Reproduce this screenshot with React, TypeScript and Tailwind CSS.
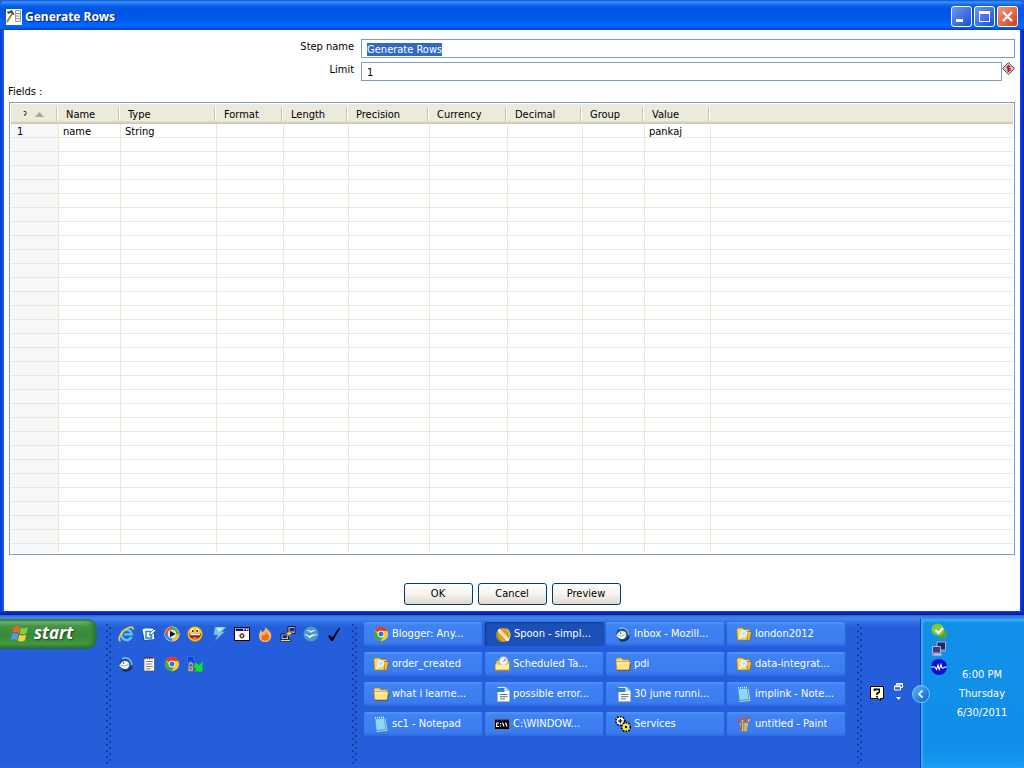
import { ReactNode, useEffect, useRef } from "react";

const columns = [
  { label: "Name", width: "w-[62px]" },
  { label: "Type", width: "w-[96px]" },
  { label: "Format", width: "w-[67px]" },
  { label: "Length", width: "w-[65px]" },
  { label: "Precision", width: "w-[81px]" },
  { label: "Currency", width: "w-[78px]" },
  { label: "Decimal", width: "w-[75px]" },
  { label: "Group", width: "w-[62px]" },
  { label: "Value", width: "w-[66px]" },
];

const firstRow = ["name", "String", "", "", "", "", "", "", "pankaj"];

const ROW_COUNT = 30;

function Icon({ children }: { children: ReactNode }) {
  return (
    <svg viewBox="0 0 16 16" className="h-4 w-4 shrink-0" aria-hidden="true">
      {children}
    </svg>
  );
}

function ChromeIcon() {
  return (
    <Icon>
      <circle cx="8" cy="8" r="7.2" fill="#f4c92c" />
      <path d="M8 8 1.8 4.2A7.2 7.2 0 0 1 14.6 5H8Z" fill="#dd3b2c" />
      <path d="M1.8 4.300A7.200 7.200 0 0 0 7.600 15.200L10.600 9.500 8 8 5.400 9.500Z" fill="#3fa648" />
      <circle cx="8" cy="8" r="3.400" fill="#fff" />
      <circle cx="8" cy="8" r="2.500" fill="#3a76c4" />
    </Icon>
  );
}

function ExplorerIcon() {
  return (
    <Icon>
      <path
        d="M13.400 11A5.200 5.200 0 1 1 13.800 8.400H6"
        fill="none"
        stroke="#1c6cc8"
        strokeWidth="3.600"
      />
      <path
        d="M13.400 11A5.200 5.200 0 1 1 13.800 8.400H6"
        fill="none"
        stroke="#62c3f8"
        strokeWidth="2.400"
      />
      <path
        d="M2.500 15C-1 14 3 6 8 3S15.600.6 15 3.600"
        fill="none"
        stroke="#f2c14a"
        strokeWidth="1.800"
      />
    </Icon>
  );
}

function DesktopIcon() {
  return (
    <Icon>
      <path d="M1 2.500 12.500 1l3 11.500L5 15.500l-4-3Z" fill="#1257a8" />
      <path d="M1.500 3.500 3 2.500h9l1.500 10.500-10 1Z" fill="#f5fbff" />
      <path d="M10 5.500H5v6.500h5.500V9H8" fill="none" stroke="#2b84cf" strokeWidth="1.500" />
      <path d="m8.500 7.500 4.500-4.500 2 1.500-4.500 4Z" fill="#fff" stroke="#1a4e92" strokeWidth=".7" />
    </Icon>
  );
}

function MediaIcon() {
  return (
    <Icon>
      <circle cx="8" cy="8" r="7.600" fill="#e8f1f8" />
      <path d="M8 .8A7.200 7.200 0 0 0 .8 8H4a4 4 0 0 1 4-4Z" fill="#e4572b" />
      <path d="M8 .8A7.200 7.200 0 0 1 15.200 8H12a4 4 0 0 0-4-4Z" fill="#57ad3a" />
      <path d="M.8 8A7.200 7.200 0 0 0 8 15.200V12a4 4 0 0 1-4-4Z" fill="#3b86dc" />
      <path d="M15.200 8A7.200 7.200 0 0 1 8 15.200V12a4 4 0 0 0 4-4Z" fill="#f3b72c" />
      <circle cx="8" cy="8" r="4.200" fill="#dfe8ee" />
      <path d="M6 4.800 11.500 8 6 11.200Z" fill="#111" />
    </Icon>
  );
}

function SmileIcon() {
  return (
    <Icon>
      <circle cx="8" cy="8" r="7.500" fill="#fbc72e" stroke="#b8741a" strokeWidth=".6" />
      <ellipse cx="5.500" cy="4.500" rx="1.500" ry="1.900" fill="#fff" />
      <ellipse cx="10.500" cy="4.500" rx="1.500" ry="1.900" fill="#fff" />
      <circle cx="5.800" cy="4.900" r="1" fill="#222" />
      <circle cx="10.200" cy="4.900" r="1" fill="#222" />
      <path d="M2 7.500h12A6 6 0 0 1 2 7.500Z" fill="#9c1c0e" />
      <path d="M3 7.500h10v1.800H3.500Z" fill="#fff" />
      <ellipse cx="8" cy="12" rx="2.600" ry="1" fill="#f2705a" />
    </Icon>
  );
}

function BoltIcon() {
  return (
    <Icon>
      <path d="M4 1h11.500L11 5.500h3L4 15l2.600-6H2.500Z" fill="#7cc4ea" stroke="#347fb8" strokeWidth=".6" />
      <path d="M4.800 1.600H13.500L8 6Z" fill="#c5e8f8" />
    </Icon>
  );
}

function WindowGearIcon() {
  return (
    <Icon>
      <path d="M.5 1.500h15v13H.5Z" fill="#fff" stroke="#000" />
      <path d="M1.500 2.500h13v2.500h-13Z" fill="#10107a" />
      <path d="M9 3h1.500v1.200H9ZM12 3h1.500v1.200H12Z" fill="#fff" />
      <path d="M8 7v5.600M5.200 9.800h5.600M6.200 8l3.600 3.600M9.800 8l-3.600 3.600" stroke="#000" />
      <circle cx="8" cy="9.800" r="1.700" fill="#f6e23a" stroke="#000" strokeWidth=".6" />
    </Icon>
  );
}

function FlameIcon() {
  return (
    <Icon>
      <path d="M8.500.5c.4 3 5.800 4 5.800 9.300a5.800 5.800 0 0 1-12.300.6C1.700 7.300 3.300 6.700 3.500 4c1.200.7 1.700 1.700 1.800 2.600C7.300 5 8.600 3 8.500.5Z" fill="#fbb564" />
      <path d="M8.800 6c2.400 2.400 3.600 4 3.100 6.300-.6 2.600-5.800 3.600-7.200.5-.9-2.200 1-3.300 2-4 .8 0 .9.6 1.300.9.8-1 1-2.200.8-3.700Z" fill="#ef6b1c" />
    </Icon>
  );
}

function PuttyIcon() {
  return (
    <Icon>
      <path d="M8 .5h7v7H8Z" fill="#d8d4c8" stroke="#111" />
      <path d="M9.500 1.800h4.500v3.700H9.500Z" fill="#1818b8" />
      <path d="M1 8h7.500v5.500H1Z" fill="#d8d4c8" stroke="#111" />
      <path d="M2.500 9.200h4.500v3H2.500Z" fill="#1818b8" />
      <path d="M.5 13.500h10v2H.5Z" fill="#d8d4c8" stroke="#111" strokeWidth=".7" />
      <path d="m11 4-6 4.500h3.500L6 12l7-5.500H9.500Z" fill="#fbea2c" stroke="#544c00" strokeWidth=".5" />
    </Icon>
  );
}

function OfficeIcon() {
  return (
    <Icon>
      <circle cx="8" cy="8" r="7.500" fill="#4a98cc" />
      <path d="M3 4.500c2-1 3.500-.6 4.700.8C9 4 11 3.800 13.500 5c-2.400-.2-4.400.3-5.500 2C6.700 5.500 5.400 4.600 3 4.500Z" fill="#fff" />
      <path d="M1 9c1.800-.8 3.900-.4 5.200 1.200C8 8.700 11 8 15 9c-3.500.3-6.700 1.200-8.300 3.200C5.400 10.200 3.700 9.200 1 9Z" fill="#fff" />
    </Icon>
  );
}

function CheckIcon() {
  return (
    <Icon>
      <path d="m2 10 1.800-1L6 11.800 12.500 2.500 14.500 1.500 6.800 15H5.200Z" fill="#000" />
    </Icon>
  );
}

function ThunderbirdIcon() {
  return (
    <Icon>
      <circle cx="8.200" cy="8" r="7" fill="#1f4f90" />
      <path d="M4 2.800c4.500-2.500 9.800.2 9.800 6.200" fill="none" stroke="#6ab6ea" strokeWidth="1.800" />
      <path d="M1.200 9.500 4 6c2-1.600 5.600-1.200 6.800 1 1.300 2.600-.4 5.500-3 5.900C5 13.200 3 12 1.200 9.500Z" fill="#f4f4f0" />
      <path d="m2.500 9.200 3.500.8 4.500-1.500" fill="none" stroke="#9da2a8" strokeWidth=".8" />
      <circle cx="5.600" cy="7" r=".7" fill="#333" />
      <path d="M5 14c3 1.800 7 .6 9-3.200" fill="none" stroke="#12294e" strokeWidth="1.500" />
    </Icon>
  );
}

function NotesIcon() {
  return (
    <Icon>
      <path d="M3 2h10.500v13H3Z" fill="#fffef4" stroke="#555" strokeWidth=".7" />
      <path d="M4 .8v2.400M6.300.8v2.400M8.600.8v2.400M11 .8v2.400" stroke="#44351f" strokeWidth="1.100" />
      <path d="M4.800 5.500h7M4.800 8h6M4.800 10.500h7M4.800 12.800h5" stroke="#707070" strokeWidth=".9" />
    </Icon>
  );
}

function SyncIcon() {
  return (
    <Icon>
      <path d="M.5.5h7L6 3l2.500 2.500-2 2-3-2.500L.5 7Z" fill="#0b45d8" stroke="#4f8fe0" strokeWidth=".5" />
      <path d="M15.500 5.500V15.500H7l2.500-2-3-3L8.500 6.500l3.500 2.500Z" fill="#12e022" />
      <path d="M2.200 10V8.500a1.600 1.600 0 0 1 3.200 0V10" fill="none" stroke="#bbb" strokeWidth="1.100" />
      <path d="M1 10h5.600v5.500H1Z" fill="#aaa" stroke="#555" strokeWidth=".6" />
      <path d="M3.300 11.500h1v2h-1Z" fill="#333" />
    </Icon>
  );
}

function FolderIcon() {
  return (
    <Icon>
      <path d="M.8 3.500 2 2h4.500L8 3.800h6.200v10H1.500Z" fill="#f6d468" stroke="#a8781c" strokeWidth=".6" />
      <path d="M1 6h12.500l2-.3-1.200 8.300H1.800Z" fill="#fbe48c" stroke="#a8781c" strokeWidth=".6" />
      <path d="M2 6.900h11.500" stroke="#fffbd8" />
      <path d="M2 14.400h12.500l1-7" fill="none" stroke="#5c4718" strokeWidth=".7" />
    </Icon>
  );
}

function SearchFolderIcon() {
  return (
    <Icon>
      <path d="M.8 3.500 2 2h4.500L8 3.500h5.500V14h-12Z" fill="#fbd766" stroke="#a8781c" strokeWidth=".7" />
      <path d="M10.500 5.500h5.200l-2 9h-2.200Z" fill="#f5bc3c" stroke="#7d5512" strokeWidth=".6" />
      <circle cx="7.800" cy="7.500" r="3" fill="#c3e6fa" stroke="#fff" />
      <path d="m5.500 9.900-2.200 2.800" stroke="#fff" strokeWidth="1.500" />
    </Icon>
  );
}

function SpoonIcon() {
  return (
    <Icon>
      <circle cx="8" cy="8" r="7" fill="#e89a1c" />
      <path d="M3.500 2.800A7 7 0 0 0 7.500 15C3 13 .5 8 3.500 2.800Z" fill="#5d8d34" />
      <path d="M11 1.800A7 7 0 0 1 13 13" fill="none" stroke="#c9d4a2" strokeWidth="1.200" />
      <path d="m4.500 3.500 8 9" stroke="#fff8df" strokeWidth="3.200" strokeLinecap="round" />
      <path d="m5 3.800 7.500 8.500" stroke="#e8b85a" strokeWidth=".7" />
    </Icon>
  );
}

function ScheduleIcon() {
  return (
    <Icon>
      <path d="M2 5.500 4 4h9l2.500 2V14.500H1Z" fill="#f6cb58" stroke="#a67820" strokeWidth=".7" />
      <circle cx="9.500" cy="5" r="4.500" fill="#eef4f8" stroke="#8b98a5" strokeWidth=".8" />
      <path d="M9.500 5.500 12 2.800" stroke="#333" strokeWidth=".8" />
      <path d="M1.500 8 5 9h7l3-1.500V13H1.500Z" fill="#fbe9a4" />
    </Icon>
  );
}

function WriterIcon() {
  return (
    <Icon>
      <path d="M3.500 1h8l4 4v10.500h-12Z" fill="#fff" stroke="#9db2c8" strokeWidth=".5" />
      <path d="M11.500 1v4h4Z" fill="#b8cbdc" />
      <path d="M0 2h10.500v4H2Z" fill="#2c88c4" />
      <path d="M6 8.500h7.500M6 10.700h7.500M6 12.900h5" stroke="#567086" />
    </Icon>
  );
}

function NotepadIcon() {
  return (
    <Icon>
      <path d="M1.500 2.500 11.500 1.500l2.500 13-11 1Z" fill="#3f96c4" />
      <path d="M2.500 3.200 10.800 2.400l1.800 10.800-9 .8Z" fill="#8fd6f2" />
      <path d="m2 1.900 9.500-.8" stroke="#e6f5fb" strokeDasharray="1 1" strokeWidth="1.500" />
      <path d="m12 2.500 2 12-10.500 1" fill="none" stroke="#d8e6d4" strokeWidth=".8" />
    </Icon>
  );
}

function ConsoleIcon() {
  return (
    <Icon>
      <path d="M.5 2.500h15v11H.5Z" fill="#000" stroke="#9e9e9e" strokeWidth=".6" />
      <path d="M1 3h14v1.200H1Z" fill="#2458b0" />
      <path d="M5 7H2.700v3.500H5" fill="none" stroke="#fff" strokeWidth="1.200" />
      <path d="M6.500 7v1.200M6.500 9.500v1.200M8.500 6.500l1.500 4M11.500 6.500l1.500 4" stroke="#fff" strokeWidth="1.200" />
    </Icon>
  );
}

function ServicesIcon() {
  return (
    <Icon>
      <circle cx="5.300" cy="5" r="4.200" fill="#fff" stroke="#000" strokeWidth="2.200" strokeDasharray="1.500 1.200" />
      <circle cx="5.300" cy="5" r="3.500" fill="#fff" />
      <path d="M3 5h4.500M5.300 3v4" stroke="#000" strokeWidth="1.100" />
      <circle cx="11" cy="11" r="4.200" fill="#f5e83c" stroke="#000" strokeWidth="2.200" strokeDasharray="1.500 1.200" />
      <circle cx="11" cy="11" r="3.500" fill="#f5e83c" />
      <circle cx="11" cy="11" r="1.200" fill="#000" />
    </Icon>
  );
}

function PaintIcon() {
  return (
    <Icon>
      <path d="m4 7-1.500-5M7 7 6.500 1M9 7l1-6M11 8l3-6.500" stroke="#d84a2c" strokeWidth="1.700" />
      <path d="m6.800 7-.4-3M12 6l1.500-3" stroke="#f4c93a" strokeWidth="1.500" />
      <path d="M3.500 6.500h9L11 15.500H5Z" fill="#c5d3c7" stroke="#776b60" strokeWidth=".6" />
      <path d="M5.500 7v7.500" stroke="#d8442f" strokeWidth="1.300" />
      <path d="M7.800 7v8" stroke="#5fab3c" strokeWidth="1.300" />
      <path d="m10.500 7-.5 7.500" stroke="#e2a13b" strokeWidth="1.300" />
    </Icon>
  );
}

const quickLaunch = [
  { name: "Internet Explorer", icon: <ExplorerIcon /> },
  { name: "Show Desktop", icon: <DesktopIcon /> },
  { name: "Media Player", icon: <MediaIcon /> },
  { name: "Messenger", icon: <SmileIcon /> },
  { name: "Winamp", icon: <BoltIcon /> },
  { name: "Batch", icon: <WindowGearIcon /> },
  { name: "Burner", icon: <FlameIcon /> },
  { name: "PuTTY", icon: <PuttyIcon /> },
  { name: "OpenOffice", icon: <OfficeIcon /> },
  { name: "Tasks", icon: <CheckIcon /> },
  { name: "Thunderbird", icon: <ThunderbirdIcon /> },
  { name: "Notes", icon: <NotesIcon /> },
  { name: "Chrome", icon: <ChromeIcon /> },
  { name: "WinSCP", icon: <SyncIcon /> },
];

const tasks = [
  { label: "Blogger: Any...", icon: <ChromeIcon /> },
  { label: "Spoon - simpl...", icon: <SpoonIcon />, active: true },
  { label: "Inbox - Mozill...", icon: <ThunderbirdIcon /> },
  { label: "london2012", icon: <SearchFolderIcon /> },
  { label: "order_created", icon: <SearchFolderIcon /> },
  { label: "Scheduled Ta...", icon: <ScheduleIcon /> },
  { label: "pdi", icon: <FolderIcon /> },
  { label: "data-integrat...", icon: <SearchFolderIcon /> },
  { label: "what i learne...", icon: <FolderIcon /> },
  { label: "possible error...", icon: <WriterIcon /> },
  { label: "30 june runni...", icon: <WriterIcon /> },
  { label: "implink - Note...", icon: <NotepadIcon /> },
  { label: "sc1 - Notepad", icon: <NotepadIcon /> },
  { label: "C:\\WINDOW...", icon: <ConsoleIcon /> },
  { label: "Services", icon: <ServicesIcon /> },
  { label: "untitled - Paint", icon: <PaintIcon /> },
];

function TitleBar() {
  const button =
    "flex h-[21px] w-[21px] items-center justify-center rounded-[3px] border border-white bg-linear-to-br";
  return (
    <header className="flex h-[30px] items-center gap-[3px] rounded-t-[7px] bg-[linear-gradient(#0a50d8_0,#3c92fb_2px,#0f66ea_5px,#0054e3_9px,#0056ea_16px,#0066ff_24px,#0064fb_27px,#0040c8_30px)] pt-[3px] pr-[6px] pl-[6px]">
      <svg viewBox="0 0 16 16" className="h-4 w-4" aria-hidden="true">
        <path d="M0 0h16v16H0Z" fill="#fff" />
        <path d="m1 13 5.500-9" stroke="#a5804a" strokeWidth="2" />
        <path d="m1 3 5-2 2.500 4.500-1.500.5-1.500-2.500-3.500 1.500Z" fill="#444" />
        <path d="M9.500 1.500h5v11h-5ZM9.500 4.500h5M9.500 7h5M9.500 9.800h5" fill="none" stroke="#999" />
      </svg>
      <h1 className="flex-1 font-['Noto_Sans','Open_Sans',sans-serif] text-[12px] leading-4 font-bold text-white [text-shadow:1px_1px_1px_#0a1f7a]">
        Generate Rows
      </h1>
      <div className="flex gap-[2px]">
        <button type="button" aria-label="Minimize" className={`${button} from-[#6c94f2] to-[#1c4fd8]`}>
          <svg viewBox="0 0 19 19" className="h-[19px] w-[19px]">
            <path d="M4 12h7v3H4Z" fill="#fff" />
          </svg>
        </button>
        <button type="button" aria-label="Maximize" className={`${button} from-[#6c94f2] to-[#1c4fd8]`}>
          <svg viewBox="0 0 19 19" className="h-[19px] w-[19px]">
            <path d="M4.500 5v9.500h10V5" fill="none" stroke="#fff" />
            <path d="M4 4h11v3H4Z" fill="#fff" />
          </svg>
        </button>
        <button type="button" aria-label="Close" className={`${button} from-[#f0987c] to-[#cf3c12]`}>
          <svg viewBox="0 0 19 19" className="h-[19px] w-[19px]">
            <path d="m5 5 9 9M14 5l-9 9" stroke="#fff" strokeWidth="2.200" />
          </svg>
        </button>
      </div>
    </header>
  );
}

function FieldsTable() {
  const line = "border-r border-[#e9e7dc] p-0";
  return (
    <div className="border border-[#7f9db9] bg-white p-px">
      <table className="w-full table-fixed border-separate border-spacing-0 text-left">
        <thead>
          <tr className="h-5 bg-[linear-gradient(#ebeadb_0,#ebeadb_17px,#d6d2c2_18px,#cbc7b8_20px)]">
            <th className="w-[48px] p-0 font-normal">
              <div className="mr-[2px] flex h-[14px] items-center justify-center gap-2 border-r border-[#c7c5b2] shadow-[1px_0_#fff]">
                <span className="text-[8px] leading-[14px]">ɂ</span>
                <svg viewBox="0 0 9 5" className="h-[5px] w-[9px]" aria-hidden="true">
                  <path d="M4.500 0 9 5H0Z" fill="#aca899" />
                </svg>
              </div>
            </th>
            {columns.map((column) => (
              <th key={column.label} className={`${column.width} p-0 font-normal`}>
                <div className="mr-[2px] h-[14px] border-r border-[#c7c5b2] pl-[7px] leading-4 shadow-[1px_0_#fff]">
                  {column.label}
                </div>
              </th>
            ))}
            <th className="p-0" aria-label="Empty" />
          </tr>
        </thead>
        <tbody>
          {Array.from({ length: ROW_COUNT }, (_, row) => (
            <tr key={row} className="h-[14px] *:border-b">
              <td className={`${line} bg-[#f7f7f7] pt-[2px] pl-[6px] leading-[11px]`}>
                {row === 0 ? "1" : ""}
              </td>
              {firstRow.map((value, i) => (
                <td key={i} className={`${line} pt-[2px] pl-[4px] leading-[11px]`}>
                  {row === 0 ? value : ""}
                </td>
              ))}
              <td className="border-[#e9e7dc] p-0" />
            </tr>
          ))}
          <tr className="h-[9px]" aria-hidden="true">
            <td className={`${line} bg-[#f7f7f7]`} />
            {columns.map((column) => (
              <td key={column.label} className={line} />
            ))}
            <td className="p-0" />
          </tr>
        </tbody>
      </table>
    </div>
  );
}

function DialogWindow() {
  const stepName = useRef<HTMLInputElement>(null);

  useEffect(() => {
    stepName.current?.focus();
    stepName.current?.select();
  }, []);

  const input =
    "h-[19px] min-w-0 flex-1 border border-[#7f9db9] bg-white px-[5px] pt-px leading-[14px] outline-none selection:bg-[#316ac5] selection:text-white";
  const button =
    "h-[22px] w-[69px] rounded-[3px] border border-[#003c74] bg-linear-to-b from-white via-[#f5f4ef] to-[#dedace] pt-px";

  return (
    <main className="rounded-t-lg bg-[linear-gradient(to_right,#0831d9_0,#0a4be4_2px,#1a66f0_4px,#0a4be4_calc(100%-4px),#0831d9_calc(100%-2px),#001ea0_100%)]">
      <TitleBar />
      <div className="mx-1 bg-white px-[5px] pt-[9px] pb-[6px] text-[11px] text-black">
        <form className="flex flex-col gap-1">
          <div className="grid grid-cols-[35%_1fr]">
            <label htmlFor="step-name" className="pr-[7px] text-right leading-[15px]">
              Step name
            </label>
            <div className="flex">
              <input id="step-name" ref={stepName} defaultValue="Generate Rows" className={input} />
            </div>
          </div>
          <div className="grid grid-cols-[35%_1fr]">
            <label htmlFor="limit" className="pr-[7px] text-right leading-[15px]">
              Limit
            </label>
            <div className="flex">
              <input id="limit" defaultValue="1" className={input} />
              <svg viewBox="0 0 13 13" className="h-[13px] w-[13px]" aria-hidden="true">
                <path d="m6.500.5 6 6-6 6-6-6Z" fill="#c4c4c4" stroke="#555" />
                <path d="M8.500 4.500h-3v2h2.500v2h-3M6.500 3v7" fill="none" stroke="#c4122c" strokeWidth="1.200" />
              </svg>
            </div>
          </div>
        </form>
        <h2 className="-ml-px pt-1 pb-[3px] leading-[14px]">Fields :</h2>
        <FieldsTable />
        <div className="mt-7 flex justify-center gap-[5px]">
          <button type="button" className={button}>OK</button>
          <button type="button" className={button}>Cancel</button>
          <button type="button" className={button}>Preview</button>
        </div>
      </div>
      <div className="h-1 bg-[linear-gradient(#0a4be4,#0831d9_1px,#001ea0_3px,#001ea0)]" />
    </main>
  );
}

function Grip() {
  return (
    <div
      aria-hidden="true"
      className="mt-[9px] mb-1 w-[5px] shrink-0 [background-image:conic-gradient(from_270deg_at_2px_2px,#1240a8_90deg,transparent_0),conic-gradient(from_270deg_at_2px_2px,#1240a8_90deg,transparent_0)] [background-position:0_0,3px_3px] [background-size:6px_6px]"
    />
  );
}

function Taskbar() {
  return (
    <footer className="flex h-[154px] border-b border-[#1941a5] bg-[linear-gradient(#2a62d4_0,#3b80e6_2px,#3f86ea_4px,#3474e2_6px,#2f6ee4_8px,#245edb_12px,#245edb_145px,#2862de_154px)] text-[11px] text-white">
      <div className="w-[106px] shrink-0 pt-1">
        <button
          type="button"
          className="flex h-[30px] w-[97px] items-center gap-1 rounded-r-[10px] bg-[linear-gradient(#3a7a3c_0,#6cb56a_3px,#439544_7px,#388a38_16px,#3f9a3f_25px,#2c702e_30px)] pl-[10px] shadow-[inset_-3px_0_4px_#2a6a3a]"
        >
          <svg viewBox="0 0 20 18" className="h-[18px] w-[20px]" aria-hidden="true">
            <path d="M4 2c2.500-1.500 4-1.300 6 0L8.600 8C6.500 6.800 5 6.700 2.500 8Z" fill="#f0602c" />
            <path d="M11 2.600c2 1.200 4.500 1 7-.5l-1.500 6c-2.500 1.500-4.700 1.500-6.900.4Z" fill="#8ccc3c" />
            <path d="M2.200 9.200c2.500-1.300 4-1.200 6.100 0L7 15.200c-2.200-1.300-4-1.200-6.500.2Z" fill="#5a94f0" />
            <path d="M9.300 9.800c2.200 1.100 4.400 1 6.900-.4l-1.500 6c-2.500 1.500-4.700 1.400-6.800.2Z" fill="#fbd03a" />
          </svg>
          <span className="pb-[2px] font-['Open_Sans','Noto_Sans',sans-serif] text-[17px] leading-5 font-bold italic [text-shadow:1px_1px_2px_#1c3c1c]">
            start
          </span>
        </button>
      </div>
      <Grip />
      <nav aria-label="Quick launch" className="grid w-[241px] shrink-0 grid-cols-10 content-start gap-y-[14px] pt-[11px] pr-[10px]">
        {quickLaunch.map((item) => (
          <button key={item.name} type="button" aria-label={item.name} className="flex justify-end">
            {item.icon}
          </button>
        ))}
      </nav>
      <Grip />
      <div className="grid flex-1 grid-cols-4 content-start gap-x-[2px] gap-y-[6px] pt-[7px] pr-[11px] pl-[7px]">
        {tasks.map((task) => (
          <button
            key={task.label}
            type="button"
            className={
              task.active
                ? "flex h-6 min-w-0 items-center gap-[3px] rounded-[2px] bg-[#1c50b8] pt-px pl-[10px] shadow-[inset_1px_1px_2px_#0e3a90]"
                : "flex h-6 min-w-0 items-center gap-[3px] rounded-[2px] bg-[linear-gradient(#5c98fb_0,#3f82f4_3px,#3b7df1_20px,#2f6ae0_24px)] pl-[9px] shadow-[inset_-1px_0_1px_#2c62d4]"
            }
          >
            {task.icon}
            <span className="truncate">{task.label}</span>
          </button>
        ))}
      </div>
      <Grip />
      <div className="flex w-[58px] shrink-0 gap-[10px] pt-[68px] pl-2">
        <svg viewBox="0 0 14 16" className="mt-[3px] h-4 w-[14px]" aria-hidden="true">
          <path d="M.5.5h13v12h-3v2l-2.500-2H.5Z" fill="#ffffe1" stroke="#000" />
          <path d="M4.500 5V3.300h4.700v3L7 7.500V9M7 10v1.500" fill="none" stroke="#000" strokeWidth="1.700" />
        </svg>
        <svg viewBox="0 0 9 18" className="h-[18px] w-[9px]" aria-hidden="true">
          <path d="M2.500 2.500v-2h6v4h-2M.5 3h6v4h-6Z" fill="none" stroke="#fff" />
          <path d="M2.500 1h6M.5 3.500h6" stroke="#fff" strokeWidth="1.500" />
          <path d="M2 14h5l-2.500 3Z" fill="#fff" />
        </svg>
      </div>
      <aside className="relative mt-1 flex w-[104px] shrink-0 border-l border-[#0d3fae] bg-[linear-gradient(#3ab4f8_0,#1290e8_4px,#0f8eea_130px,#18a0f2_150px)] pl-[10px] shadow-[inset_2px_0_2px_#35b0f6]">
        <div className="flex flex-col gap-[2px] pt-1">
          <svg viewBox="0 0 16 16" className="h-4 w-4" aria-hidden="true">
            <circle cx="6.500" cy="6.500" r="6" fill="#7cc832" />
            <circle cx="11.500" cy="11" r="4.500" fill="#57a823" />
            <circle cx="8" cy="7.500" r="5" fill="#82cc3a" />
            <path d="m4.500 7 3 3 4.500-5" fill="none" stroke="#fff" strokeWidth="2" />
          </svg>
          <svg viewBox="0 0 16 16" className="h-4 w-4" aria-hidden="true">
            <path d="M6 1h8.500v8H6Z" fill="#26265f" stroke="#c4c4e0" strokeWidth=".8" />
            <path d="M1.500 5.500h8V12h-8Z" fill="#3c3c80" stroke="#d4d4e8" strokeWidth=".8" />
            <path d="M1 14.500h9l1-1.500H3ZM10.500 10.500h4.500" fill="#d8d8e8" stroke="#a0a0c0" strokeWidth=".7" />
          </svg>
          <svg viewBox="0 0 16 16" className="h-4 w-4" aria-hidden="true">
            <circle cx="8" cy="8" r="8" fill="#0a10d2" />
            <path d="M0 8h4l1.500 2.500L7 6l1.200 4.500L10 5.500l1 3.500h1.500L14 8h2" fill="none" stroke="#fff" strokeWidth="1.100" />
          </svg>
        </div>
        <div className="flex flex-1 flex-col pt-[46px] pr-3 pl-[5px] text-center leading-[19px]">
          <time>6:00 PM</time>
          <span>Thursday</span>
          <span>6/30/2011</span>
        </div>
        <button
          type="button"
          aria-label="Hide icons"
          className="absolute top-[66px] -left-[9px] flex h-[18px] w-[18px] items-center justify-center rounded-full border border-[#7cc4f8] bg-linear-to-br from-[#58b4f8] to-[#0c62c8]"
        >
          <svg viewBox="0 0 8 8" className="h-2 w-2">
            <path d="M5.500.5 2 4l3.500 3.500" fill="none" stroke="#fff" strokeWidth="1.700" />
          </svg>
        </button>
      </aside>
    </footer>
  );
}

export default function App() {
  return (
    <div className="min-h-screen bg-[#245edb] font-['DejaVu_Sans_Condensed','DejaVu_Sans','Noto_Sans',sans-serif]">
      <DialogWindow />
      <Taskbar />
    </div>
  );
}
